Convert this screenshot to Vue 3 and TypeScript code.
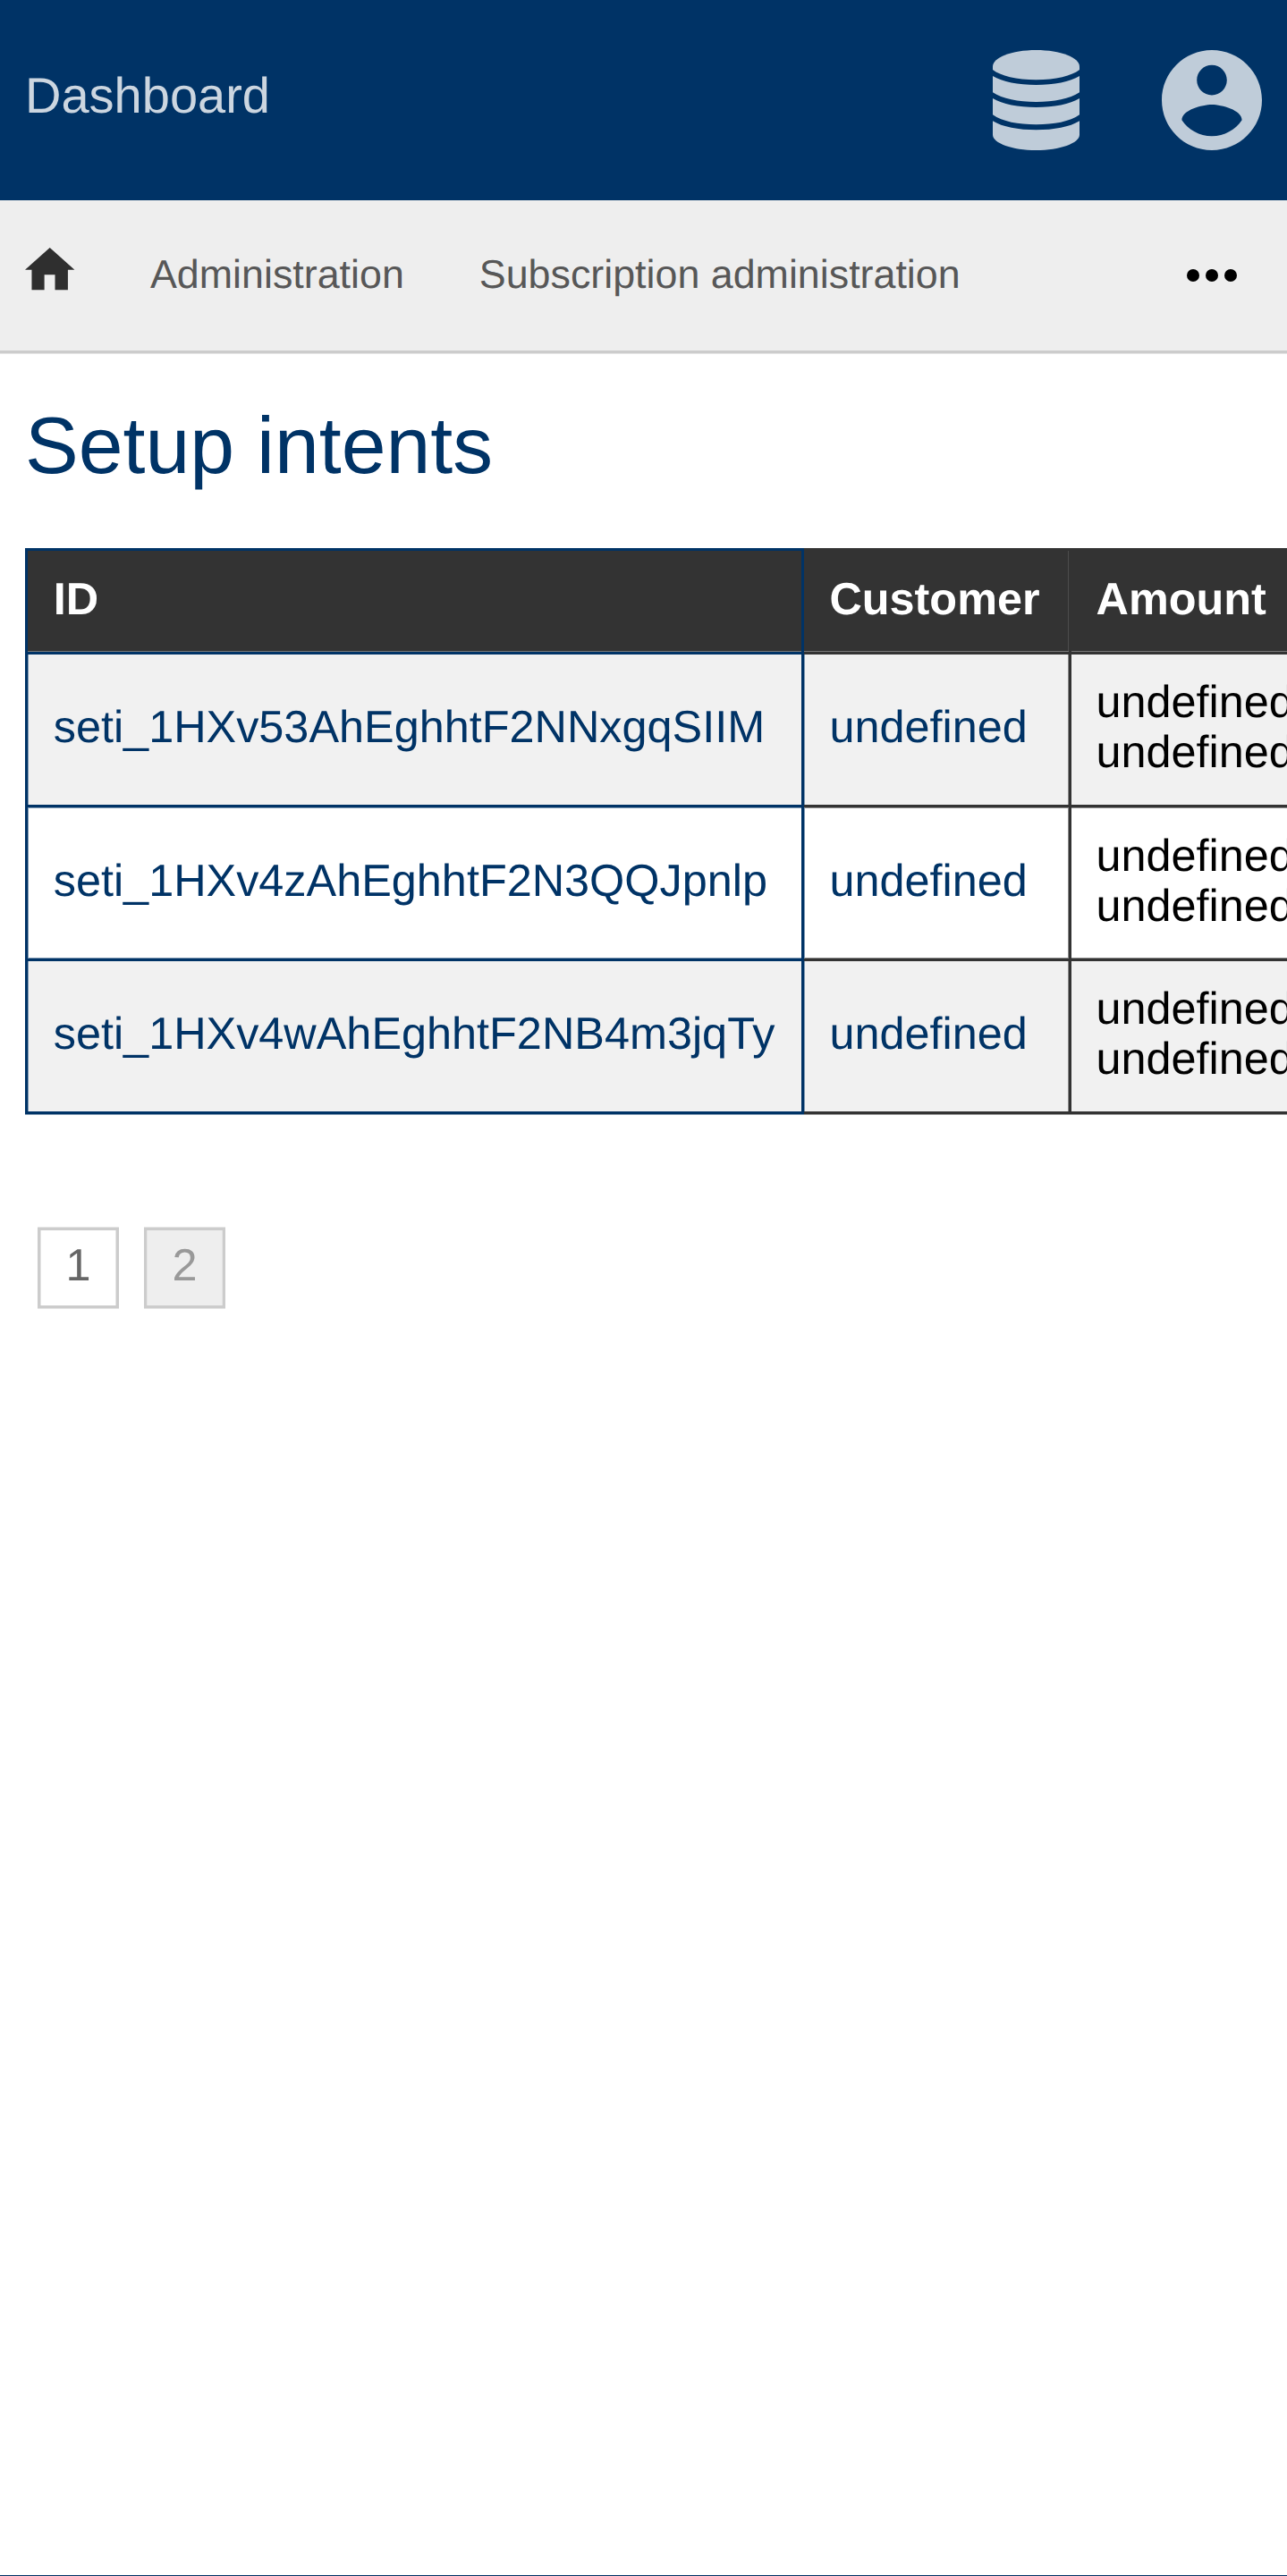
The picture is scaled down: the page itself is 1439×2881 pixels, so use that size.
<script setup lang="ts">
interface SetupIntent {
  id: string
  customer: string
  amount: string[]
}

const navLinks: string[] = ['Administration', 'Subscription administration']
const columns: string[] = ['ID', 'Customer', 'Amount']
const intents: SetupIntent[] = [
  { id: 'seti_1HXv53AhEghhtF2NNxgqSIIM', customer: 'undefined', amount: ['undefined', 'undefined'] },
  { id: 'seti_1HXv4zAhEghhtF2N3QQJpnlp', customer: 'undefined', amount: ['undefined', 'undefined'] },
  { id: 'seti_1HXv4wAhEghhtF2NB4m3jqTy', customer: 'undefined', amount: ['undefined', 'undefined'] },
]
const pages: number[] = [1, 2]
const currentPage = 2
</script>

<template>
  <div class="page">
    <header class="topbar">
      <a class="brand">Dashboard</a>
      <div class="menus">
        <svg class="icon-db" viewBox="0 0 291 336" aria-label="Administrator menu">
          <path d="M0 55C0 25 63 0 145.500 0S291 25 291 55V66C266 86 210 100 145.500 100S25 86 0 66Z" />
          <path d="M0 87C32 107 86 117 145.500 117S259 107 291 87V142C259 164 205 174 145.500 174S32 164 0 142Z" />
          <path d="M0 162C32 182 86 192 145.500 192S259 182 291 162V217C259 240 205 250 145.500 250S32 240 0 217Z" />
          <path d="M0 238C32 258 86 268 145.500 268S259 258 291 238V284C291 312 225 336 145.500 336S0 312 0 284Z" />
        </svg>
        <svg class="icon-user" viewBox="2 2 20 20" aria-label="Account menu">
          <path d="M12 2C6.480 2 2 6.480 2 12s4.480 10 10 10 10-4.480 10-10S17.520 2 12 2zm0 3c1.660 0 3 1.340 3 3s-1.340 3-3 3-3-1.340-3-3 1.340-3 3-3zm0 14.200c-2.500 0-4.710-1.280-6-3.220.030-1.990 4-3.080 6-3.080 1.990 0 5.970 1.090 6 3.080-1.290 1.940-3.500 3.220-6 3.220z" />
        </svg>
      </div>
    </header>

    <nav class="navbar">
      <svg class="icon-home" viewBox="2 3 20 17.200" preserveAspectRatio="none" aria-label="Home">
        <path d="M9.800 20.200v-6.200h4.300v6.200h5.200V12H22L12 3 2 12h2.700v8.200z" />
      </svg>
      <a v-for="link in navLinks" :key="link" class="nav-link">{{ link }}</a>
      <svg class="icon-more" viewBox="0 0 56 14" aria-label="More">
        <circle cx="7" cy="7" r="7" />
        <circle cx="28" cy="7" r="7" />
        <circle cx="49" cy="7" r="7" />
      </svg>
    </nav>

    <main class="content">
      <h1>Setup intents</h1>
      <table>
        <thead>
          <tr>
            <th v-for="column in columns" :key="column">{{ column }}</th>
          </tr>
        </thead>
        <tbody>
          <tr v-for="intent in intents" :key="intent.id">
            <td><a>{{ intent.id }}</a></td>
            <td><a>{{ intent.customer }}</a></td>
            <td>
              <div v-for="(line, i) in intent.amount" :key="i">{{ line }}</div>
            </td>
          </tr>
        </tbody>
      </table>
      <div class="pagination">
        <a v-for="page in pages" :key="page" :class="{ current: page === currentPage }">{{ page }}</a>
      </div>
    </main>
  </div>
</template>

<style>
body {
  margin: 0;
}
</style>

<style scoped>
.page {
  box-sizing: border-box;
  width: 1439px;
  height: 2881px;
  overflow: hidden;
  background: #fff;
  border-bottom: 1px solid #036;
  font-family: "Liberation Sans", Arial, sans-serif;
  text-rendering: geometricPrecision;
}

.topbar {
  box-sizing: border-box;
  display: flex;
  justify-content: space-between;
  height: 224px;
  padding: 0 28.500px 0 28px;
  background: #036;
}

.brand {
  color: #ccd6e0;
  font-size: 56px;
  line-height: 213px;
}

.menus {
  display: flex;
  gap: 92px;
  padding-top: 56px;
  fill: #bfccd9;
}

.icon-db {
  width: 97px;
  height: 112px;
}

.icon-user {
  width: 112px;
  height: 112px;
}

.navbar {
  box-sizing: border-box;
  display: flex;
  align-items: flex-start;
  height: 171px;
  padding: 0 56.500px 0 28.200px;
  background: #eee;
  border-bottom: 3px solid #ccc;
  box-shadow: 0 1px 0 #e5e5e5;
}

.icon-home {
  width: 55.400px;
  height: 47.200px;
  margin-top: 53.400px;
  fill: #2f2f2f;
}

.nav-link {
  margin-left: 84.400px;
  color: #575757;
  font-size: 44.800px;
  line-height: 167px;
}

.nav-link + .nav-link {
  margin-left: 84px;
}

.icon-more {
  width: 56px;
  height: 14px;
  margin: 77px 0 0 auto;
}

.content {
  padding-left: 28px;
}

h1 {
  margin: 0;
  padding: 47px 0 59px;
  color: #036;
  font-size: 89.600px;
  font-weight: 400;
  line-height: 112px;
}

table {
  width: 1470px;
  table-layout: fixed;
  border-collapse: separate;
  border-spacing: 0;
  font-size: 50.400px;
  line-height: 56px;
}

th,
td {
  box-sizing: border-box;
  padding: 0 0 0 27.500px;
  border: 0 solid #333;
  border-top-width: 3px;
  text-align: left;
  vertical-align: top;
  white-space: nowrap;
}

th:first-child,
td:first-child {
  width: 871px;
  padding-left: 28.700px;
  border-color: #036;
  border-right-width: 3px;
  border-left-width: 3px;
}

th:nth-child(2),
td:nth-child(2) {
  width: 299px;
  padding-left: 28.400px;
  border-right-width: 3px;
}

th {
  height: 116px;
  padding-top: 26px;
  background: #333;
  color: #fff;
  box-shadow: inset 0 -1px 0 #777;
}

th:nth-child(2) {
  box-shadow: inset 0 -1px 0 #777, inset -1px 0 0 #4d4d4d;
}

td {
  height: 171px;
  padding-top: 25px;
}

td:nth-child(-n + 2) {
  padding-top: 53px;
}

td:first-child {
  box-shadow: inset 1px 0 0 #7f99b2;
}

td:nth-child(2) {
  box-shadow: inset 1px 0 0 #7f99b2, inset -1px 0 0 #8c8c8c;
}

tbody tr:nth-child(odd) {
  background: #f1f1f1;
}

tbody tr:nth-child(2) td {
  height: 172px;
  padding-top: 26px;
}

tbody tr:nth-child(2) td:nth-child(-n + 2) {
  padding-top: 54px;
}

tbody tr:nth-child(2) td:first-child {
  box-shadow: inset 1px 1px 0 #7f99b2, inset 0 -1px 0 #7f99b2;
}

tbody tr:nth-child(2) td:nth-child(2) {
  box-shadow: inset 1px 0 0 #7f99b2, inset -1px 1px 0 #8c8c8c, inset 0 -1px 0 #8c8c8c;
}

tbody tr:nth-child(2) td:last-child {
  box-shadow: inset 0 1px 0 #8c8c8c, inset 0 -1px 0 #8c8c8c;
}

tbody tr:last-child td {
  height: 174px;
  border-bottom-width: 3px;
}

tbody tr:last-child td:first-child {
  box-shadow: inset 1px 0 0 #7f99b2, 0 1px 0 #7f99b2;
}

tbody tr:last-child td:nth-child(2) {
  box-shadow: inset 1px 0 0 #7f99b2, inset -1px 0 0 #8c8c8c, 0 1px 0 #999;
}

tbody tr:last-child td:last-child {
  box-shadow: 0 1px 0 #999;
}

td a {
  color: #036;
}

.pagination {
  display: flex;
  gap: 28px;
  padding: 127px 0 0 14px;
}

.pagination a {
  box-sizing: border-box;
  width: 91px;
  height: 90px;
  border: 3px solid #ccc;
  box-shadow: inset 1px 0 0 #e5e5e5, inset -1px 0 0 #e5e5e5, 0 1px 0 #e5e5e5, 0 -1px 0 #e5e5e5;
  color: #666;
  font-size: 50.400px;
  line-height: 77px;
  text-align: center;
}

.pagination .current {
  background: #eee;
  color: #999;
}
</style>
